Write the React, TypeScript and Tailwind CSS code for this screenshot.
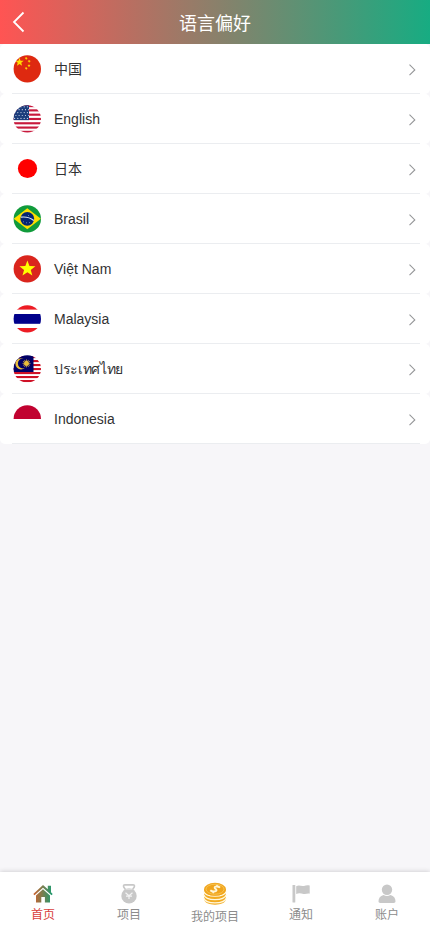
import type { ReactNode } from "react"

function Star({ x, y, r, rot = 0, fill = "#ffde00" }: { x: number; y: number; r: number; rot?: number; fill?: string }) {
    const points = Array.from({ length: 10 }, (_, i) => {
        const radius = i % 2 === 0 ? r : r * 0.42
        const a = ((i * 36 - 90 + rot) * Math.PI) / 180
        return `${x + radius * Math.cos(a)},${y + radius * Math.sin(a)}`
    }).join(" ")
    return <polygon points={points} fill={fill} />
}

function Flag({ id, children }: { id: string; children: ReactNode }) {
    return (
        <svg width="28" height="28" viewBox="0 0 28 28" className="shrink-0">
            <clipPath id={id}>
                <circle cx="14.3" cy="13.9" r="13.7" />
            </clipPath>
            <g clipPath={`url(#${id})`}>{children}</g>
        </svg>
    )
}

const China = () => (
    <Flag id="cn">
        <rect width="28" height="28" fill="#de2910" />
        <Star x={6.5} y={7.2} r={4.4} />
        <Star x={13.2} y={3.4} r={1.7} rot={20} />
        <Star x={16.2} y={6.2} r={1.7} rot={40} />
        <Star x={16} y={10.6} r={1.7} />
        <Star x={13.2} y={13.4} r={1.7} rot={20} />
    </Flag>
)

const Usa = () => (
    <Flag id="us">
        <rect width="28" height="28" fill="#fff" />
        {[0, 1, 2, 3, 4, 5, 6].map(i => (
            <rect key={i} y={i * 4.3} width="28" height="2.15" fill="#c8193c" />
        ))}
        <rect width="16" height="15.1" fill="#1c3d7c" />
        {[0, 1, 2, 3, 4].map(r =>
            [0, 1, 2, 3, 4].map(c => (
                <circle key={`${r}-${c}`} cx={1.6 + c * 3.2 + (r % 2) * 1.3} cy={1.8 + r * 2.9} r="0.6" fill="#cfd9ea" />
            ))
        )}
    </Flag>
)

const Japan = () => (
    <Flag id="jp">
        <rect width="28" height="28" fill="#fff" />
        <circle cx="14.5" cy="13.5" r="9.6" fill="#fe0000" />
    </Flag>
)

const Brazil = () => (
    <Flag id="br">
        <rect width="28" height="28" fill="#109b3b" />
        <path d="M.7 13.8 14.3 3.3 27.9 13.8 14.3 24.3z" fill="#fedf00" />
        <circle cx="14.3" cy="13.8" r="6.9" fill="#062672" />
        <path d="M7.9 12.2c4.8-.7 9.4.5 12.9 3.3" fill="none" stroke="#d7e3ef" strokeWidth="1.2" />
        <path d="M10 16.8h1M13 17.8h1M16 17.6h1M15 10.5h1" stroke="#8ba3cc" strokeWidth=".7" />
    </Flag>
)

const Vietnam = () => (
    <Flag id="vn">
        <rect width="28" height="28" fill="#da251d" />
        <Star x={14.4} y={13.8} r={8.4} fill="#ffff00" />
    </Flag>
)

const Thailand = () => (
    <Flag id="th">
        <rect width="28" height="28" fill="#fff" />
        <rect width="28" height="4.6" fill="#ed1c24" />
        <rect y="9" width="28" height="9.8" fill="#00008b" />
        <rect y="23" width="28" height="5" fill="#ed1c24" />
    </Flag>
)

const Malaysia = () => (
    <Flag id="my">
        <rect width="28" height="28" fill="#fff" />
        {[0, 1, 2, 3, 4, 5, 6].map(i => (
            <rect key={i} y={i * 4 + 1} width="28" height="2.1" fill="#cf1126" />
        ))}
        <rect width="20.5" height="17" fill="#010066" />
        <circle cx="8" cy="8.8" r="5.6" fill="#e8bd3c" />
        <circle cx="9.8" cy="8.5" r="4.9" fill="#010066" />
        <circle cx="13.5" cy="8.4" r="2.3" fill="#ffcc33" />
        {[0, 30, 60, 90, 120, 150].map(a => (
            <path key={a} d="M13.5 4.4v8" stroke="#e8bd3c" strokeWidth=".7" transform={`rotate(${a} 13.5 8.4)`} />
        ))}
    </Flag>
)

const Indonesia = () => (
    <Flag id="id">
        <rect width="28" height="28" fill="#fff" />
        <rect width="28" height="14" fill="#c10230" />
    </Flag>
)

const languages = [
    { name: "中国", icon: <China /> },
    { name: "English", icon: <Usa /> },
    { name: "日本", icon: <Japan /> },
    { name: "Brasil", icon: <Brazil /> },
    { name: "Việt Nam", icon: <Vietnam /> },
    { name: "Malaysia", icon: <Thailand /> },
    { name: "ประเทศไทย", icon: <Malaysia />, tight: true },
    { name: "Indonesia", icon: <Indonesia /> },
]

const HomeIcon = () => (
    <svg width="20" height="20" viewBox="0 0 20 20">
        <defs>
            <linearGradient id="home" x1="0" y1="0" x2="1" y2="0">
                <stop offset="0" stopColor="#d0612f" />
                <stop offset="1" stopColor="#1b9d72" />
            </linearGradient>
        </defs>
        <path
            d="M10 1 14.8 5.3V1.7H18v6.6l1.7 1.6-1.2 1.4L10 3.7 1.5 11.3.3 9.9zM10 5.2l7 6.2v7.1h-5.1v-5.6H8.3v5.6H3v-7.1z"
            fill="url(#home)"
        />
    </svg>
)

const BagIcon = () => (
    <svg width="20" height="20" viewBox="0 0 20 20">
        <path d="M6.8 6 4.8 3.2Q4 .9 6 .9h8q2 0 1.200 2.300L13.200 6" fill="none" stroke="#c8c8c8" strokeWidth="1.700" />
        <circle cx="10" cy="11.900" r="7.700" fill="#c8c8c8" />
        <path d="M6.500 5.200h7" stroke="#fff" strokeWidth=".5" />
        <path d="m6.500 8.800 3.500 3 3.500-3M10 11.800v3.200M7 12.200h6" fill="none" stroke="#f4f4f4" strokeWidth="1.200" />
    </svg>
)

const CoinsIcon = () => (
    <svg width="24" height="24" viewBox="0 0 24 24">
        <path d="M1.2 8v9.500c0 3 5 5.200 10.800 5.200s10.800-2.200 10.800-5.200V8z" fill="#f2ab20" />
        <path
            d="M.8 9.500c1 3 5.300 4.700 11.200 4.700s10.200-1.700 11.200-4.700M.8 13c1 3 5.300 4.600 11.200 4.600s10.200-1.600 11.200-4.600M.8 16.300c1 3 5.300 4.600 11.200 4.600s10.200-1.600 11.200-4.600"
            fill="none"
            stroke="#fff8e0"
            strokeWidth="1.300"
        />
        <ellipse cx="12" cy="7.300" rx="11" ry="6.500" fill="#f0a51d" />
        <ellipse cx="12" cy="7.200" rx="9" ry="5" fill="none" stroke="#f9cf66" strokeWidth=".7" />
        <path d="M17 5.600c-1.500-1.500-5.600-1.600-5.300.1.300 1.400 2.200 1.300 1.800 2.700-.5 1.500-4.200 1.600-6.200-.2" fill="none" stroke="#fff6d8" strokeWidth="1.900" />
        <path d="m14.500 3.300-1 1.200M10.800 9.500l-1 1.600" stroke="#fff6d8" strokeWidth="1.500" />
    </svg>
)

const FlagIcon = () => (
    <svg width="20" height="20" viewBox="0 0 20 20" fill="#c8c8c8">
        <rect x="1.500" y="1" width="2.800" height="17.500" rx=".6" />
        <path d="M5.200 2.300c3-1.700 5 .3 7.800-.4 2-.7 3.400-.8 5.700-.4v8.200c-2.500-.5-3.700.7-6.200.2-2.700-.6-4.500-1.200-7.300.1z" />
    </svg>
)

const UserIcon = () => (
    <svg width="20" height="20" viewBox="0 0 20 20" fill="#c8c8c8">
        <circle cx="10" cy="5.800" r="5.200" />
        <path d="M6.500 10.900c2.200 1.300 4.800 1.300 7 0 3.300.9 5 3.300 5 6.400 0 1.200-.7 1.700-1.700 1.700H3.200c-1 0-1.700-.5-1.700-1.700 0-3.100 1.700-5.500 5-6.400z" />
    </svg>
)

const tabs = [
    { label: "首页", icon: <HomeIcon />, active: true },
    { label: "项目", icon: <BagIcon /> },
    { label: "我的项目", icon: <CoinsIcon /> },
    { label: "通知", icon: <FlagIcon /> },
    { label: "账户", icon: <UserIcon /> },
]

export default function App() {
    return (
        <div className="flex h-screen flex-col bg-[#f7f6f9] font-['Liberation_Sans','Noto_Sans_CJK_SC','Noto_Sans',sans-serif] text-[#323233]">
            <header className="grid h-11 shrink-0 grid-cols-[44px_1fr_44px] items-center bg-[linear-gradient(90deg,#ff5453,#17ac82)] text-white">
                <button className="pl-3" aria-label="back">
                    <svg width="13" height="22" viewBox="0 0 13 22" fill="none" stroke="currentColor" strokeWidth="1.8">
                        <path d="M11.5 1.5 2 11l9.5 9.5" />
                    </svg>
                </button>
                <h1 className="pt-1 text-center text-lg leading-6">语言偏好</h1>
            </header>
            <main className="flex-1">
                {languages.map(lang => (
                    <div key={lang.name} className="h-[50px] rounded-[5px] bg-white pr-2.5 pl-3">
                        <div className="flex h-full items-center border-b border-[#ebedf0] pl-px">
                            {lang.icon}
                            <span className={lang.tight ? "ml-[13px] flex-1 text-sm leading-6 tracking-[-0.35px]" : "ml-[13px] flex-1 text-sm leading-6"}>
                                {lang.name}
                            </span>
                            <svg width="8" height="14" viewBox="0 0 8 14" className="mt-0.5 mr-1" fill="none" stroke="#969799" strokeWidth="1.1">
                                <path d="M1.5 1.6 6.8 6.900l-5.300 5.300" />
                            </svg>
                        </div>
                    </div>
                ))}
            </main>
            <nav className="grid h-[60px] shrink-0 grid-cols-5 bg-white shadow-[0_0_5px_rgba(0,0,0,0.2)]">
                {tabs.map(tab => (
                    <div key={tab.label} className="flex flex-col items-center justify-center pt-1">
                        {tab.icon}
                        <span className={tab.active ? "mt-0.5 text-xs leading-[18px] text-[#d8403c]" : "mt-0.5 text-xs leading-[18px] text-[#8c8c8c]"}>
                            {tab.label}
                        </span>
                    </div>
                ))}
            </nav>
        </div>
    )
}
